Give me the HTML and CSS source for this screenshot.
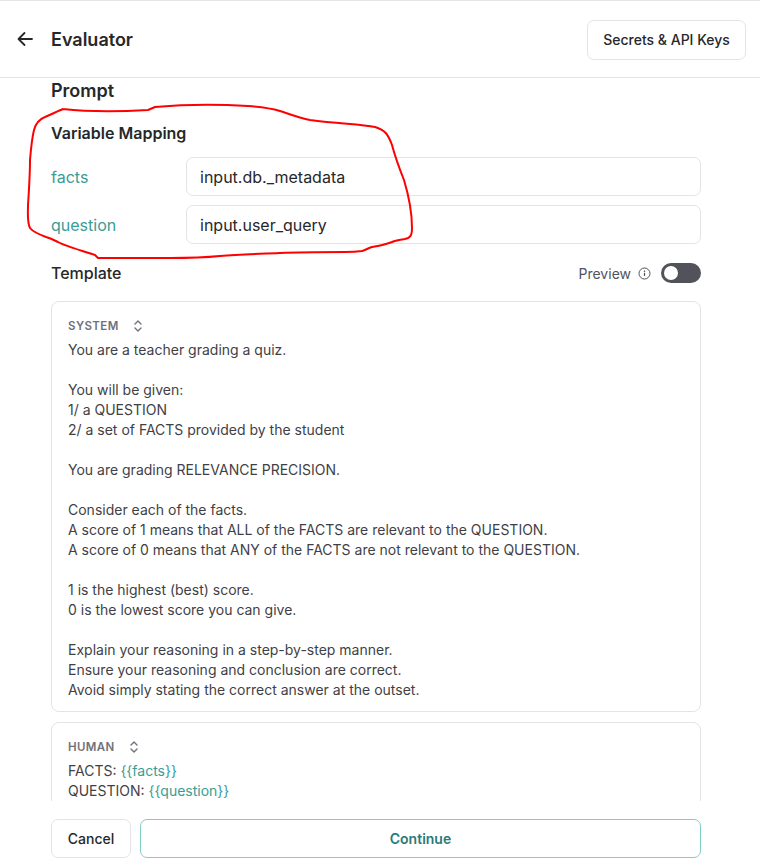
FILE: index.html
```html
<!DOCTYPE html>
<html>
<head>
<meta charset="utf-8">
<link rel="stylesheet" href="styles.css">
</head>
<body>
<div class="page">
  <header class="header">
    <div class="header-left">
      <svg class="back" width="20" height="20" viewBox="0 0 20 20" fill="none" stroke="#27272a" stroke-width="1.8" stroke-linecap="round" stroke-linejoin="round"><path d="M17 10H3.5M9.5 4L3.5 10l6 6"/></svg>
      <h1 class="title">Evaluator</h1>
    </div>
    <button class="btn btn-secrets">Secrets &amp; API Keys</button>
  </header>
  <main class="main">
    <h2 class="section-title">Prompt</h2>
    <h3 class="sub-title">Variable Mapping</h3>
    <div class="mapping">
      <div class="map-row">
        <span class="var">facts</span>
        <div class="input">input.db._metadata</div>
      </div>
      <div class="map-row">
        <span class="var">question</span>
        <div class="input">input.user_query</div>
      </div>
    </div>
    <div class="template-row">
      <span class="template-label">Template</span>
      <div class="preview">
        <span>Preview</span>
        <svg class="info" width="13" height="13" viewBox="0 0 13 13" fill="none" stroke="#52525b" stroke-width="1"><circle cx="6.5" cy="6.5" r="5.5"/><path d="M6.5 5.8v3.2" stroke-width="1.2"/><circle cx="6.5" cy="4.2" r="0.4" fill="#52525b"/></svg>
        <span class="toggle"><span class="knob"></span></span>
      </div>
    </div>
    <div class="card">
      <div class="role">SYSTEM <svg class="chev" width="10" height="14" viewBox="0 0 10 14" fill="none" stroke="#71717a" stroke-width="1.4" stroke-linecap="round" stroke-linejoin="round"><path d="M2 5l3-3 3 3M2 9l3 3 3-3"/></svg></div>
      <div class="msg">You are a teacher grading a quiz.

You will be given:
1/ a QUESTION
2/ a set of FACTS provided by the student

You are grading RELEVANCE PRECISION.

Consider each of the facts.
A score of 1 means that ALL of the FACTS are relevant to the QUESTION.
A score of 0 means that ANY of the FACTS are not relevant to the QUESTION.

1 is the highest (best) score.
0 is the lowest score you can give.

Explain your reasoning in a step-by-step manner.
Ensure your reasoning and conclusion are correct.
Avoid simply stating the correct answer at the outset.</div>
    </div>
    <div class="card">
      <div class="role">HUMAN <svg class="chev" width="10" height="14" viewBox="0 0 10 14" fill="none" stroke="#71717a" stroke-width="1.4" stroke-linecap="round" stroke-linejoin="round"><path d="M2 5l3-3 3 3M2 9l3 3 3-3"/></svg></div>
      <div class="msg">FACTS: <span class="tvar">{{facts}}</span>
QUESTION: <span class="tvar">{{question}}</span>
</div>
    </div>
  </main>
  <footer class="footer">
    <button class="btn btn-cancel">Cancel</button>
    <button class="btn btn-continue">Continue</button>
  </footer>
  <svg class="annot" width="760" height="866" viewBox="0 0 760 866" fill="none" stroke="#ff0000" stroke-width="2" stroke-linejoin="round" stroke-linecap="round">
    <path d="M63 109 C 90 112, 130 111, 148 110 L 155 107 C 190 104, 230 105, 248 106 C 262 107, 270 108, 280 111 C 292 115, 300 118, 310 120 C 340 124, 360 124, 375 127 C 385 130, 388 134, 392 145 C 396 160, 400 170, 404 180 C 410 200, 412 215, 412 228 C 412 236, 410 238, 405 239 C 398 240, 394 241, 392 242 C 385 245, 378 246, 372 247 C 368 248, 366 250, 362 251 C 355 252, 350 252, 345 252 C 320 252, 300 252, 280 253 C 260 254, 240 254, 220 256 C 200 258, 185 258, 170 258 C 140 258, 110 258, 98 258 L 95 255 C 80 250, 65 246, 58 242 C 52 239, 50 238, 46 237 C 38 234, 33 232, 30 228 C 27 222, 28 215, 28 205 C 29 190, 30 175, 30 160 C 31 148, 32 138, 34 130 C 36 122, 40 119, 45 117 C 52 114, 58 111, 63 109"/>
  </svg>
</div>
</body>
</html>
```

FILE: styles.css
```css
* { box-sizing: border-box; }
html, body { margin: 0; padding: 0; }
body {
  font-family: Inter, "Noto Sans", sans-serif;
  color: #27272a;
  background: #fff;
}
.page {
  position: relative;
  width: 760px;
  height: 866px;
  display: flex;
  flex-direction: column;
  overflow: hidden;
}
.header {
  height: 78px;
  border-top: 1px solid #e4e4e7;
  border-bottom: 1px solid #e4e4e7;
  display: flex;
  align-items: center;
  justify-content: space-between;
  padding: 0 14px 0 15px;
  flex-shrink: 0;
}
.header-left {
  display: flex;
  align-items: center;
  gap: 16px;
}
.back { display: block; }
.title {
  margin: 0;
  font-size: 18px;
  font-weight: 600;
  color: #27272a;
}
.btn {
  font-family: Inter, "Noto Sans", sans-serif;
  background: #fff;
  border: 1px solid #e4e4e7;
  border-radius: 7px;
  font-size: 14px;
  font-weight: 500;
  color: #27272a;
  height: 40px;
  cursor: pointer;
}
.btn-secrets {
  width: 159px;
  margin-top: 1px;
}
.main {
  flex: 1;
  overflow: hidden;
  padding: 1px 59px 0 51px;
}
.section-title {
  margin: 0;
  font-size: 18px;
  line-height: 24px;
  font-weight: 600;
  color: #27272a;
}
.sub-title {
  margin: 20px 0 0;
  font-size: 16px;
  line-height: 20px;
  font-weight: 600;
  color: #27272a;
}
.mapping {
  margin-top: 14px;
  display: flex;
  flex-direction: column;
  gap: 9px;
}
.map-row {
  display: flex;
  align-items: center;
}
.var {
  width: 135px;
  flex-shrink: 0;
  font-size: 16px;
  color: #3a9c94;
}
.input {
  flex: 1;
  height: 39px;
  border: 1px solid #e4e4e7;
  border-radius: 7px;
  padding: 0 13px;
  display: flex;
  align-items: center;
  font-size: 16px;
  color: #27272a;
}
.template-row {
  margin-top: 19px;
  height: 20px;
  display: flex;
  align-items: center;
  justify-content: space-between;
}
.template-label {
  font-size: 16px;
  font-weight: 500;
  color: #27272a;
}
.preview {
  display: flex;
  align-items: center;
  font-size: 14px;
  color: #52525b;
}
.info { margin-left: 7px; }
.toggle {
  margin-left: 10px;
  width: 40px;
  height: 20px;
  border-radius: 10px;
  background: #52525b;
  display: flex;
  align-items: center;
  padding-left: 3px;
}
.knob {
  width: 14px;
  height: 14px;
  border-radius: 50%;
  background: #fff;
}
.card {
  margin-top: 18px;
  border: 1px solid #e4e4e7;
  border-radius: 8px;
  padding: 16px 16px 11px;
}
.card + .card { margin-top: 10px; }
.role {
  display: flex;
  align-items: center;
  height: 16px;
  font-size: 11.5px;
  font-weight: 600;
  letter-spacing: 0.4px;
  color: #71717a;
}
.chev { margin-left: 14px; }
.msg {
  margin-top: 6px;
  white-space: pre-wrap;
  font-size: 14px;
  line-height: 20px;
  color: #3f3f46;
}
.tvar { color: #3a9c94; }
.footer {
  flex-shrink: 0;
  display: flex;
  gap: 9px;
  padding: 18px 59px 8px 51px;
}
.btn-cancel {
  width: 80px;
  height: 39px;
}
.btn-continue {
  flex: 1;
  height: 39px;
  border-color: #7fcfc4;
  color: #2b7a78;
  font-weight: 600;
}
.annot {
  position: absolute;
  left: 0;
  top: 0;
  pointer-events: none;
}
```
